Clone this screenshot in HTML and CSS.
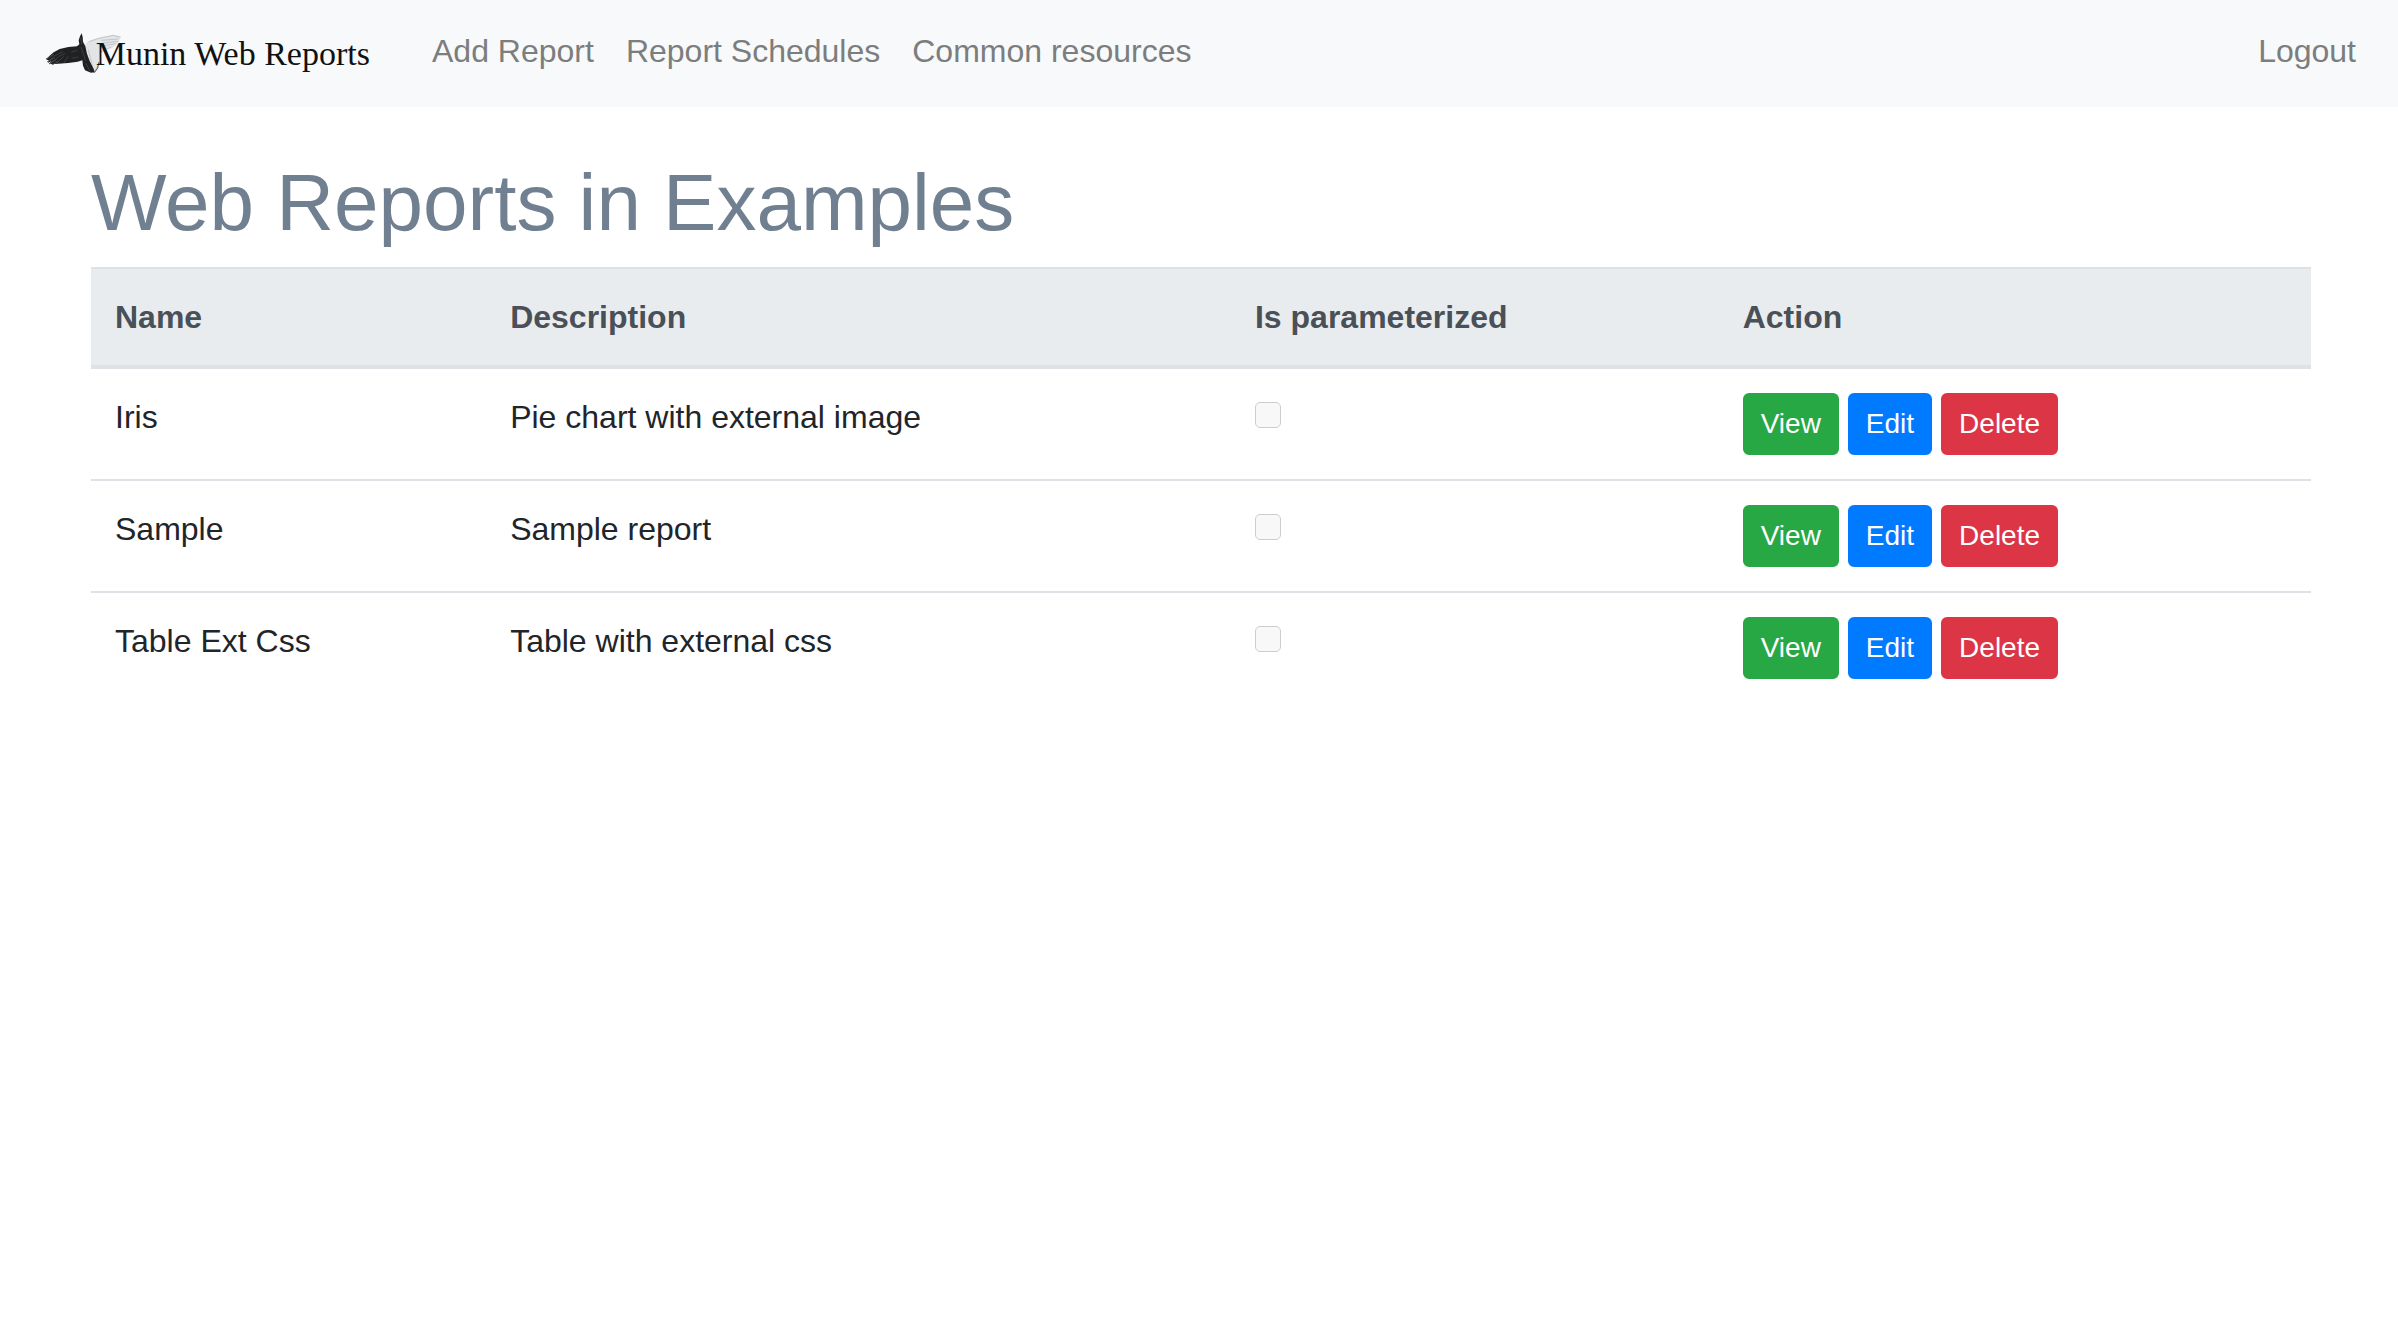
FILE: index.html
```html
<!DOCTYPE html>
<html lang="en">
<head>
  <meta charset="utf-8">
  <meta name="viewport" content="width=device-width, initial-scale=1">
  <title>Munin Web Reports</title>
  <link rel="stylesheet" href="styles.css">
</head>
<body>
  <header class="navbar">
    <a class="brand" href="#">
      <svg class="brand-logo" viewBox="0 0 984 126">
        <!-- pale right wing -->
        <path fill="#e3e4e6" d="M118 38 L130 24 L160 14 L205 5 L228 10 L224 20 L216 34 L200 46 L184 50 L166 62 L160 96 L148 120 L130 80z"/>
        <path fill="none" stroke="#b4b6b9" stroke-width="2" d="M132 26l30-10 42-9 22 6M170 22l50-4M176 30l44-5M178 38l34-6M164 58l34-16M130 50l16 64M160 96l-14 22"/>
        <!-- dark left wing, head and tail -->
        <path fill="#202123" d="M4 80 L12 70 L26 58 L44 48 L70 42 L96 40 L103 34 L101 22 L105 10 L110 1 L113 12 L114 26 L121 40 L126 62 L134 84 L146 108 L149 118 L138 119 L120 112 L114 98 L112 82 L98 86 L70 90 L40 92 L20 94 L14 90 L20 84 L8 90 L12 82z"/>
        <path fill="none" stroke="#77797d" stroke-width="1" d="M8 86l22-18 24-12M18 90l24-20 18-8M36 90l20-20M56 90l14-20M107 14l3 20M108 42l14 42M122 90l14 26M78 58l20-6M80 76l20-4"/>
        <path fill="none" stroke="#4a4b4e" stroke-width="3" d="M3 78l24-14M7 86l22-12M12 93l22-14M22 95l18-10M148 119l10-14 4-18"/>
        <text class="brand-text" x="152" y="97">Munin Web Reports</text>
      </svg>
    </a>
    <nav class="nav">
      <a class="nav-link" href="#">Add Report</a>
      <a class="nav-link" href="#">Report Schedules</a>
      <a class="nav-link" href="#">Common resources</a>
    </nav>
    <a class="nav-link logout" href="#">Logout</a>
  </header>
  <main class="content">
    <h1 class="title">Web Reports in Examples</h1>
    <table class="reports">
      <colgroup>
        <col class="col-name">
        <col class="col-description">
        <col class="col-parameterized">
        <col>
      </colgroup>
      <thead>
        <tr><th scope="col">Name</th><th scope="col">Description</th><th scope="col">Is parameterized</th><th scope="col">Action</th></tr>
      </thead>
      <tbody>
        <tr>
          <td>Iris</td>
          <td>Pie chart with external image</td>
          <td><input class="check" type="checkbox" aria-label="Iris is parameterized" disabled></td>
          <td><div class="actions"><button class="btn btn-view" type="button">View</button><button class="btn btn-edit" type="button">Edit</button><button class="btn btn-delete" type="button">Delete</button></div></td>
        </tr>
        <tr>
          <td>Sample</td>
          <td>Sample report</td>
          <td><input class="check" type="checkbox" aria-label="Sample is parameterized" disabled></td>
          <td><div class="actions"><button class="btn btn-view" type="button">View</button><button class="btn btn-edit" type="button">Edit</button><button class="btn btn-delete" type="button">Delete</button></div></td>
        </tr>
        <tr>
          <td>Table Ext Css</td>
          <td>Table with external css</td>
          <td><input class="check" type="checkbox" aria-label="Table Ext Css is parameterized" disabled></td>
          <td><div class="actions"><button class="btn btn-view" type="button">View</button><button class="btn btn-edit" type="button">Edit</button><button class="btn btn-delete" type="button">Delete</button></div></td>
        </tr>
      </tbody>
    </table>
  </main>
</body>
</html>
```
FILE: styles.css
```css
* {
  box-sizing: border-box;
}

body {
  margin: 0;
  background: #fff;
  color: #212529;
  font-family: "Liberation Sans", Arial, sans-serif;
  font-size: 32px;
  line-height: 48px;
}

.navbar {
  display: flex;
  align-items: flex-start;
  padding: 27px 42px 32px 45px;
  background: #f8f9fa;
}

.brand {
  display: block;
  margin-right: 59px;
  padding-top: 6px;
}

.brand-logo {
  display: block;
  width: 328px;
  height: 42px;
}

.brand-text {
  fill: #111;
  font-family: "Liberation Serif", "Times New Roman", serif;
  font-size: 102px;
}

.nav {
  display: flex;
  gap: 32px;
}

.nav-link {
  color: #7c7d7d;
  text-decoration: none;
}

.logout {
  margin-left: auto;
}

.content {
  padding: 48px 87px 48px 91px;
}

.title {
  margin: 0 0 16px;
  color: #708090;
  font-size: 80px;
  font-weight: 400;
  line-height: 96px;
}

.reports {
  width: 100%;
  table-layout: fixed;
  border-spacing: 0;
}

.col-name {
  width: 17.8%;
}

.col-description {
  width: 33.55%;
}

.col-parameterized {
  width: 21.97%;
}

.reports th,
.reports td {
  padding: 24px;
  text-align: left;
  vertical-align: top;
}

.reports th {
  border-top: 2px solid #dee2e6;
  border-bottom: 4px solid #dee2e6;
  background: #e9ecef;
  color: #495057;
}

.reports tr + tr td {
  border-top: 2px solid #dee2e6;
}

.check {
  display: block;
  width: 26px;
  height: 26px;
  margin: 9px 0 0;
  appearance: none;
  border: 1px solid #cdcdcd;
  border-radius: 5px;
  background: #f8f8f8;
}

.actions {
  display: flex;
  gap: 9px;
}

.btn {
  padding: 8px 16px;
  border: 2px solid;
  border-radius: 6px;
  color: #fff;
  font-family: inherit;
  font-size: 28px;
  line-height: 42px;
}

.btn-view {
  border-color: #28a745;
  background: #28a745;
}

.btn-edit {
  border-color: #007bff;
  background: #007bff;
}

.btn-delete {
  border-color: #dc3545;
  background: #dc3545;
}
```
